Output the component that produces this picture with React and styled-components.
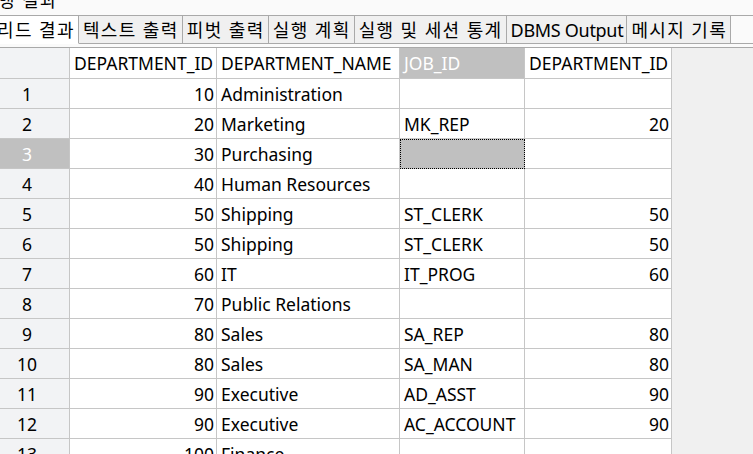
import React from 'react';
import styled, { createGlobalStyle } from 'styled-components';

const GlobalStyle = createGlobalStyle`
  html, body {
    margin: 0;
    padding: 0;
    background: #f0f0f0;
    overflow: hidden;
  }
  body {
    font-family: "Noto Sans", "Noto Sans CJK KR", sans-serif;
    font-size: 17.5px;
    color: #000;
  }
`;

const Page = styled.div`
  width: 753px;
  height: 454px;
  overflow: hidden;
  display: flex;
  flex-direction: column;
  background: #f0f0f0;
`;

const TitleStrip = styled.div`
  height: 15px;
  flex: none;
  background: #fafafa;
  overflow: hidden;
`;

const TitleText = styled.div`
  margin-top: -12px;
  margin-left: -20px;
  line-height: 24px;
  font-size: 18px;
  letter-spacing: 1.4px;
  white-space: nowrap;
`;

const TabBar = styled.div`
  height: 28px;
  flex: none;
  display: flex;
  background: #fafafa;
  border-top: 1px solid #a9a9a9;
  overflow: hidden;
  font-size: 18px;
`;

const Tab = styled.div`
  flex: none;
  display: flex;
  align-items: center;
  padding: 0 3px 0 4px;
  margin-left: ${p => p.$offset || 0}px;
  letter-spacing: ${p => (p.$latin ? '-0.3px' : '1.4px')};
  background: ${p => (p.$active ? '#fff' : '#f0f0f0')};
  border-right: 1px solid #a9a9a9;
  border-bottom: 1px solid ${p => (p.$active ? '#fff' : '#a9a9a9')};
  white-space: nowrap;
  line-height: 1;
`;

const TabFill = styled.div`
  flex: 1;
  border-bottom: 1px solid #a9a9a9;
`;

const TabGap = styled.div`
  height: 3px;
  flex: none;
  background: #fafafa;
  border-bottom: 1px solid #a9a9a9;
`;

const GridArea = styled.div`
  flex: 1;
  display: flex;
  background: #f0f0f0;
  overflow: hidden;
`;

const Grid = styled.div`
  flex: none;
  display: grid;
  grid-template-columns: 70px 147px 183px 125px 147px;
  grid-template-rows: 31px;
  grid-auto-rows: 30px;
  align-content: start;
`;

const Cell = styled.div`
  box-sizing: border-box;
  border-right: 1px solid #c6c6c6;
  border-bottom: 1px solid #c6c6c6;
  display: flex;
  align-items: center;
  justify-content: ${p => (p.$right ? 'flex-end' : 'flex-start')};
  padding: ${p => (p.$right ? '0 2px 0 0' : '0 0 0 4px')};
  background: ${p => (p.$selected ? '#c0c0c0' : '#fff')};
  color: ${p => (p.$selected ? '#fff' : '#000')};
  white-space: nowrap;
  overflow: hidden;
  outline: ${p => (p.$focus ? '1px dotted #000' : 'none')};
  outline-offset: -1px;
`;

const RowNum = styled(Cell)`
  justify-content: center;
  padding: 0 15px 0 0;
  background: ${p => (p.$selected ? '#c0c0c0' : '#f2f3f5')};
`;

const columns = ['DEPARTMENT_ID', 'DEPARTMENT_NAME', 'JOB_ID', 'DEPARTMENT_ID'];

const rows = [
  [10, 'Administration', '', ''],
  [20, 'Marketing', 'MK_REP', 20],
  [30, 'Purchasing', '', ''],
  [40, 'Human Resources', '', ''],
  [50, 'Shipping', 'ST_CLERK', 50],
  [50, 'Shipping', 'ST_CLERK', 50],
  [60, 'IT', 'IT_PROG', 60],
  [70, 'Public Relations', '', ''],
  [80, 'Sales', 'SA_REP', 80],
  [80, 'Sales', 'SA_MAN', 80],
  [90, 'Executive', 'AD_ASST', 90],
  [90, 'Executive', 'AC_ACCOUNT', 90],
  [100, 'Finance', '', ''],
];

const tabs = ['그리드 결과', '텍스트 출력', '피벗 출력', '실행 계획', '실행 및 세션 통계', 'DBMS Output', '메시지 기록'];

export default function App() {
  const selRow = 2;
  const selCol = 2;
  return (
    <Page>
      <GlobalStyle />
      <TitleStrip>
        <TitleText>실행 결과</TitleText>
      </TitleStrip>
      <TabBar>
        {tabs.map((t, i) => (
          <Tab
            key={t}
            $active={i === 0}
            $offset={i === 0 ? -25 : 0}
            $latin={/^[A-Za-z ]+$/.test(t)}
          >
            {t}
          </Tab>
        ))}
        <TabFill />
      </TabBar>
      <TabGap />
      <GridArea>
        <Grid>
          <RowNum />
          {columns.map((c, i) => (
            <Cell key={i} $selected={i === selCol}>
              {c}
            </Cell>
          ))}
          {rows.map((r, ri) => (
            <React.Fragment key={ri}>
              <RowNum $selected={ri === selRow}>{ri + 1}</RowNum>
              <Cell $right>{r[0]}</Cell>
              <Cell>{r[1]}</Cell>
              <Cell $selected={ri === selRow} $focus={ri === selRow}>{r[2]}</Cell>
              <Cell $right>{r[3]}</Cell>
            </React.Fragment>
          ))}
        </Grid>
      </GridArea>
    </Page>
  );
}
